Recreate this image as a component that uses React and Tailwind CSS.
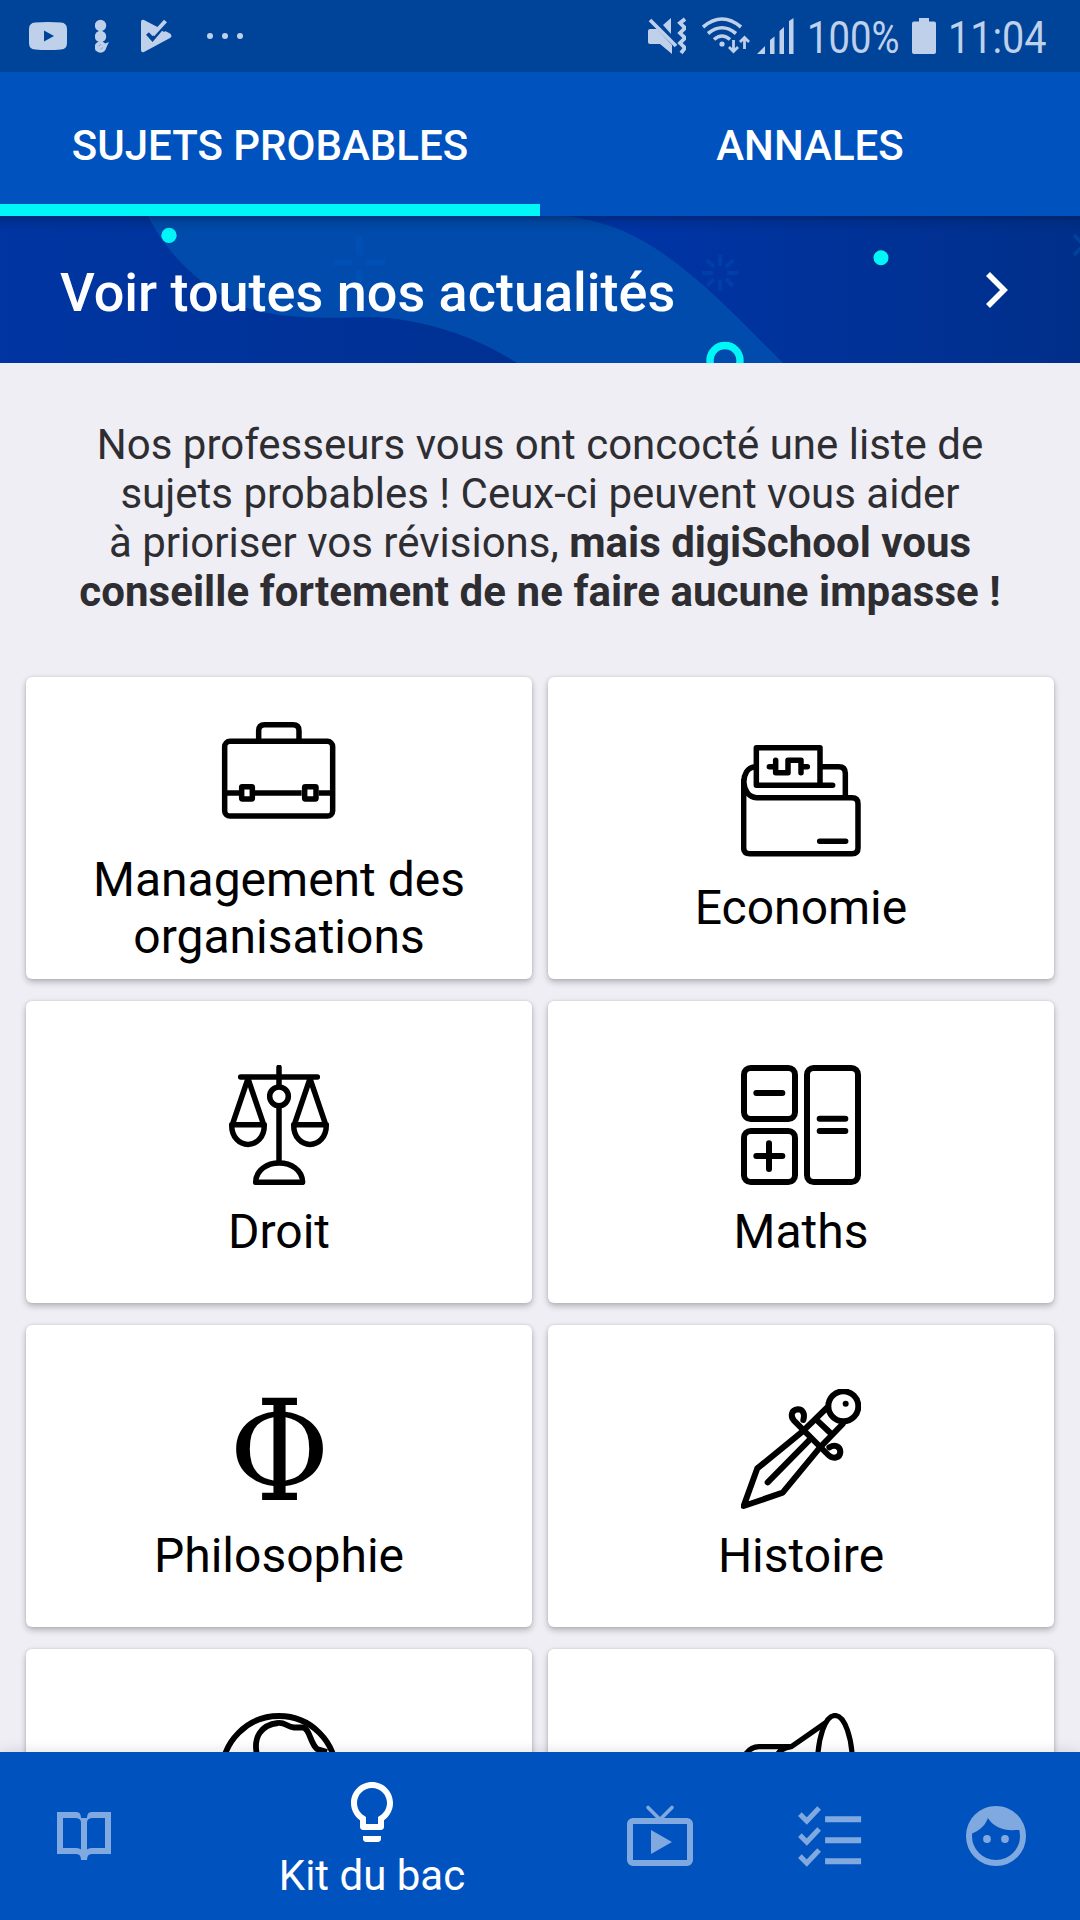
import React from "react";

/* SUBJECT ICONS */
function BriefcaseIcon() {
  return (
    <svg viewBox="57 33 360 360" className="w-[120px] h-[120px] mb-0.5" fill="none" stroke="black" strokeWidth="16.5">
      <rect x="74" y="124" width="324" height="224" rx="16" />
      <path d="M176 124V92Q176 74 194 74H279Q297 74 297 92V124M74 279H117M165 279H305M356 279H398" />
      <rect x="125" y="260" width="32" height="37" rx="2" />
      <rect x="314" y="260" width="34" height="37" rx="2" />
    </svg>
  );
}

function WalletIcon() {
  return (
    <svg viewBox="63 63 360 360" className="w-[120px] h-[120px]" fill="none" stroke="black" strokeWidth="16.5" strokeLinecap="round" strokeLinejoin="round">
      <path d="M338 196H109V83H300V190" />
      <path d="M104 140C60 144 60 230 110 233H396Q414 233 414 251V384Q414 401 396 401H89Q71 401 71 384V180" />
      <path d="M306 140H356Q376 140 376 160V230M299 364H377" />
      <path d="M148 140H166M167 121V158H204V121H243V158M243 140H262" />
    </svg>
  );
}

function ScalesIcon() {
  return (
    <svg viewBox="57 75 360 360" className="w-[120px] h-[120px]" fill="none" stroke="black" strokeWidth="16.5" strokeLinecap="round" strokeLinejoin="round">
      <path d="M122 111H352M237 82V135M237 203V366" />
      <circle cx="237" cy="169" r="28" />
      <path d="M144 116L97 254M144 116L191 254M95 254H193C193 333 95 333 95 254Z" />
      <path d="M330 116L283 254M330 116L377 254M281 254H379C379 333 281 333 281 254Z" />
      <path d="M167 427H308C306 350 169 350 167 427Z" />
    </svg>
  );
}

function MathsIcon() {
  return (
    <svg viewBox="63 75 360 360" className="w-[120px] h-[120px]" fill="none" stroke="black" strokeWidth="18" strokeLinecap="round">
      <rect x="72" y="84" width="153" height="153" rx="20" />
      <rect x="72" y="273" width="153" height="153" rx="20" />
      <rect x="261" y="84" width="153" height="342" rx="20" />
      <path d="M109 159H187M109 348H187M147 310V387M299 236H376M299 273H376" />
    </svg>
  );
}

function PhiIcon() {
  return (
    <div className="w-[120px] h-[120px] pt-1.5 flex items-center justify-center">
      <span className="block font-['DejaVu_Serif',serif] text-[140px] leading-[120px] scale-x-[0.875]">Φ</span>
    </div>
  );
}

function SwordIcon() {
  return (
    <svg viewBox="63 57 360 360" className="w-[120px] h-[120px]" fill="none" stroke="black" strokeWidth="18" strokeLinecap="round" strokeLinejoin="round">
      <circle cx="370" cy="109" r="45" />
      <circle cx="377" cy="101" r="9" fill="black" stroke="none" />
      <path d="M320 114L248 184L112 295L71 408L188 368L300 232L368 162" />
      <path d="M292 152L328 186M270 208L143 337" />
      <path d="M250 150C256 130 248 118 233 118C214 120 210 138 222 152L325 255C338 268 360 265 361 246C360 226 342 224 328 232" />
    </svg>
  );
}

function GlobeIcon() {
  return (
    <svg viewBox="0 0 120 120" className="w-[120px] h-[120px]" fill="none" stroke="black" strokeWidth="5.8" strokeLinejoin="round">
      <circle cx="60" cy="60" r="57" />
      <path d="M38 42C34 24 42 12 59 10C66 9 68 14 75 14.500H84C91 16 91 30 98 36L108 39" />
    </svg>
  );
}

function MegaphoneIcon() {
  return (
    <svg viewBox="0 0 120 120" className="w-[120px] h-[120px]" fill="none" stroke="black" strokeWidth="5.2" strokeLinejoin="round">
      <ellipse cx="94" cy="52" rx="17.500" ry="49.500" />
      <path d="M4 42C8 36 12 33.700 18 33.700H50.400L85 9.500M36 42Q40 35 50.400 33.700" />
    </svg>
  );
}

const subjects = [
  { name: "Management des organisations", Icon: BriefcaseIcon },
  { name: "Economie", Icon: WalletIcon },
  { name: "Droit", Icon: ScalesIcon },
  { name: "Maths", Icon: MathsIcon },
  { name: "Philosophie", Icon: PhiIcon },
  { name: "Histoire", Icon: SwordIcon },
  { name: "", Icon: GlobeIcon },
  { name: "", Icon: MegaphoneIcon },
];

function StatusBar() {
  return (
    <div className="h-[72px] shrink-0 bg-[#004499] text-[#bfd0ea] flex items-center">
      {/* Notifications */}
      <svg viewBox="0 0 38 28" className="ml-[29px] w-[38px] h-7" fill="currentColor">
        <path fillRule="evenodd" d="M6 .5Q19-.5 32 .5Q38 1 38 7V21Q38 27 32 27.500Q19 28.500 6 27.500Q0 27 0 21V7Q0 1 6 .5ZM15 8.500V19.500L25 14Z" />
      </svg>
      <svg viewBox="0 0 14 34" className="ml-7 w-3.5 h-[34px]" fill="currentColor">
        <circle cx="5.500" cy="6.500" r="5.700" />
        <circle cx="5.500" cy="17.500" r="5.700" />
        <circle cx="5.500" cy="28" r="5.800" />
        <path d="M9 25L14 23L11 29Z" />
        <path d="M3.500 27L6 25.500M5.500 30L8 28.500" stroke="#8ba8d2" fill="none" />
      </svg>
      <svg viewBox="0 0 31 34" className="ml-8 w-[31px] h-[34px]" fill="currentColor">
        <path d="M0 3Q0 0 3 1L29 14.500Q32 17 29 19L3 33Q0 34 0 31Z" />
        <path d="M16 8L25 0L31 8L23 13Z" fill="#004499" />
        <path d="M6.500 14.500L11.500 20L26 3" fill="none" stroke="#004499" strokeWidth="4" />
        <path d="M9.500 11.500L13 14.500L24.500 2" fill="none" stroke="currentColor" strokeWidth="4" />
      </svg>
      <svg viewBox="0 0 38 8" className="ml-[34px] w-[38px] h-2" fill="currentColor">
        <circle cx="4" cy="4" r="3" />
        <circle cx="19" cy="4" r="3" />
        <circle cx="34" cy="4" r="3" />
      </svg>

      {/* System */}
      <svg viewBox="0 0 38 38" className="ml-auto w-[38px] h-[38px]" fill="currentColor">
        <path d="M0 14Q0 12 2 12H9L24 28V37L12 27H2Q0 27 0 25ZM15 8L23 1V17Z" />
        <path d="M2 3L28 29" stroke="currentColor" strokeWidth="3.800" />
        <path d="M37 2L32 6L37 11L32 16L37 21L32 26L37 31L33 36" stroke="currentColor" strokeWidth="3.800" fill="none" />
      </svg>
      <svg viewBox="0 0 48 38" className="ml-4 w-12 h-[38px]" fill="none" stroke="currentColor" strokeWidth="3.600">
        <path d="M1 10Q20-6 39 10M6 16.500Q20 5 34 16.500M12 22.500Q20 15.500 28 22.500" />
        <circle cx="20" cy="27" r="2.600" fill="currentColor" stroke="none" />
        <path d="M31.500 23V34M27 30L31.500 34.500L36 30M42.500 32V21M38 25L42.500 20.500L47 25" strokeWidth="2.800" />
      </svg>
      <svg viewBox="0 0 37 36" className="ml-[7px] w-[37px] h-9" fill="currentColor">
        <path d="M0 36L8 28V36ZM13 22L17.500 18.500V36H13ZM22.500 13L27 9V36H22.500ZM32 3L36.500 0V36H32Z" />
      </svg>
      <div className="ml-[13px] w-[93px]">
        <span className="block w-max origin-left scale-x-[0.85] text-[45px] leading-[72px] pt-[3px]">100%</span>
      </div>
      <svg viewBox="0 0 24 36" className="ml-3 w-6 h-9" fill="currentColor">
        <path d="M7 0H17V3.500H22Q24 3.500 24 5.500V34Q24 36 22 36H2Q0 36 0 34V5.500Q0 3.500 2 3.500H7Z" />
      </svg>
      <div className="ml-3 w-[98px] mr-[34px]">
        <span className="block w-max origin-left scale-x-[0.88] text-[45px] leading-[72px] pt-[3px]">11:04</span>
      </div>
    </div>
  );
}

function Banner() {
  return (
    <div className="relative h-[147px] shrink-0 overflow-hidden bg-[#00329c]">
      <svg viewBox="0 0 1080 147" className="absolute inset-0 w-full h-full" fill="none">
        <defs>
          <linearGradient id="left" gradientUnits="userSpaceOnUse" x1="0" y1="0" x2="520" y2="0">
            <stop offset="0" stopColor="#0035a2" />
            <stop offset="1" stopColor="#003092" />
          </linearGradient>
          <linearGradient id="right" gradientUnits="userSpaceOnUse" x1="560" y1="0" x2="1080" y2="0">
            <stop offset="0" stopColor="#0035a9" />
            <stop offset="1" stopColor="#002f8a" />
          </linearGradient>
          <linearGradient id="shade" x1="0" y1="0" x2="0" y2="1">
            <stop offset="0" stopColor="#001a4d" stopOpacity="0.45" />
            <stop offset="0.4" stopColor="#001a4d" stopOpacity="0.15" />
            <stop offset="1" stopColor="#001a4d" stopOpacity="0" />
          </linearGradient>
        </defs>
        <rect width="560" height="147" fill="url(#left)" />
        <rect x="540" width="540" height="147" fill="url(#right)" />
        <path d="M148 0C165 35 195 65 234 87C275 105 330 102 375 101C425 104 475 120 517 147H783C735 100 670 25 600 7Q580 1 561 0Z" fill="#004bab" />
        <g stroke="#004fb4" strokeWidth="6">
          <path d="M333 46.500H352M366 46.500H385M359 20V39M359 54V72" />
        </g>
        <path d="M702 57H713M727 57H738M720 39V50M720 64V75M707 44L714 51M726 63L733 70M733 44L726 51M714 63L707 70" stroke="#003eaa" strokeWidth="4" />
        <path d="M1074 19L1082 27M1074 39L1082 31" stroke="#00419c" strokeWidth="4" />
        <circle cx="169" cy="19.400" r="7.700" fill="#00f7f7" />
        <circle cx="881" cy="41.700" r="7.500" fill="#00f7f7" />
        <circle cx="725" cy="144.500" r="15" stroke="#00f7f7" strokeWidth="7.400" />
        <rect width="1080" height="16" fill="url(#shade)" />
      </svg>
      <div className="relative h-full flex items-center justify-between pl-[60px] pr-[72px]">
        <h1 className="text-[54px] font-medium leading-[64px] text-white pt-[7px]">Voir toutes nos actualités</h1>
        <svg viewBox="0 0 22 36" className="w-[22px] h-9 mt-px" fill="none" stroke="white" strokeWidth="5.600">
          <path d="M2 2L18 18L2 34" />
        </svg>
      </div>
    </div>
  );
}

function BottomNav() {
  return (
    <nav className="relative h-[168px] shrink-0 bg-[#0052bf] text-[#80a9df] flex shadow-[0_-2px_12px_rgba(0,0,0,0.1)]">
      <div className="w-[168px] flex items-center justify-center">
        <svg viewBox="0 0 24 24" className="w-[72px] h-[72px]" fill="currentColor">
          <path fillRule="evenodd" d="M3 4H9.500Q11 4 11 6H13Q13 4 14.500 4H21V18H14.500Q13 18 13 20H11Q11 18 9.500 18H3ZM5 6H9Q11 6 11 7.500V16.500Q10.500 16 9.500 16H5ZM19 6H15Q13 6 13 7.500V16.500Q13.500 16 14.500 16H19Z" />
        </svg>
      </div>
      <div className="w-[408px] pt-6 flex flex-col items-center text-white">
        <svg viewBox="0 0 24 24" className="w-[72px] h-[72px]" fill="currentColor">
          <path d="M9 21c0 .55.45 1 1 1h4c.55 0 1-.45 1-1v-1H9v1zm3-19C8.140 2 5 5.140 5 9c0 2.380 1.190 4.470 3 5.740V17c0 .55.45 1 1 1h6c.55 0 1-.45 1-1v-2.260c1.810-1.270 3-3.360 3-5.740 0-3.860-3.140-7-7-7zm2.850 11.100l-.85.6V16h-4v-2.300l-.85-.6C7.800 12.160 7 10.630 7 9c0-2.760 2.240-5 5-5s5 2.240 5 5c0 1.630-.8 3.160-2.150 4.100z" />
        </svg>
        <span className="text-[42px] leading-[50px] mt-[3px]">Kit du bac</span>
      </div>
      <div className="w-[168px] flex items-center justify-center">
        <svg viewBox="0 0 24 24" className="w-[72px] h-[72px]" fill="none" stroke="currentColor">
          <rect x="2" y="7" width="20" height="14" rx="1" strokeWidth="2" />
          <path d="M8 2.500L12 6.500L16 2.500" strokeWidth="1.200" strokeLinecap="round" />
          <path d="M9 10V18L16 14Z" fill="currentColor" stroke="none" />
        </svg>
      </div>
      <div className="w-[168px] pl-0.5 flex items-center justify-center">
        <svg viewBox="0 0 24 24" className="w-[72px] h-[72px]" fill="none" stroke="currentColor">
          <path d="M10.700 6.400H22.700M10.700 13.400H22.700M10.700 20.400H22.700" strokeWidth="2" />
          <path d="M2.300 4.700L4.600 7L8.700 2.700M2.300 11.700L4.600 14L8.700 9.700M2.300 18.700L4.600 21L8.700 16.700" strokeWidth="1.700" />
        </svg>
      </div>
      <div className="w-[168px] flex items-center justify-center">
        <svg viewBox="0 0 24 24" className="w-[72px] h-[72px]" fill="currentColor">
          <circle cx="12" cy="12" r="9" fill="none" stroke="currentColor" strokeWidth="2" />
          <path d="M2.700 11.500C5.500 11 8.300 9 9.300 6C11.500 9.500 15.500 10.600 20.500 9.800L20 6L15 2.500H9L4 6Z" />
          <circle cx="9" cy="13" r="1.300" />
          <circle cx="15" cy="13" r="1.300" />
        </svg>
      </div>
    </nav>
  );
}

export default function App() {
  return (
    <div className="w-[1080px] h-[1920px] overflow-hidden flex flex-col bg-[#efeef5] font-[Roboto,sans-serif]">
      <StatusBar />

      {/* TABS */}
      <div className="h-36 shrink-0 flex bg-[#0052bf] text-white text-[42px] font-medium">
        <div className="w-1/2 pt-3.5 flex items-center justify-center border-b-12 border-[#00f7f7]">SUJETS PROBABLES</div>
        <div className="w-1/2 pt-0.5 flex items-center justify-center">ANNALES</div>
      </div>

      <Banner />

      {/* CONTENT */}
      <main className="flex-1 min-h-0 overflow-hidden">
        <p className="pt-[57px] h-[314px] text-center text-[42px] leading-[49px] text-[#2e2e32]">
          Nos professeurs vous ont concocté une liste de <br />
          sujets probables ! Ceux-ci peuvent vous aider <br />
          à prioriser vos révisions, <b>mais digiSchool vous</b> <br />
          <b className="tracking-[0.06px]">conseille fortement de ne faire aucune impasse !</b>
        </p>

        <div className="grid grid-cols-2 gap-x-4 gap-y-[22px] px-[26px]">
          {subjects.map(({ name, Icon }, i) => (
            <div
              key={i}
              className="h-[302px] pt-5 flex flex-col items-center justify-center gap-[18px] bg-white rounded-[6px] shadow-[0_3px_6px_rgba(0,0,0,0.25),0_0_3px_rgba(0,0,0,0.1)]"
            >
              <Icon />
              <h2 className="w-[420px] min-h-[57px] text-center text-[48px] leading-[57px] text-black">{name}</h2>
            </div>
          ))}
        </div>
      </main>

      <BottomNav />
    </div>
  );
}
